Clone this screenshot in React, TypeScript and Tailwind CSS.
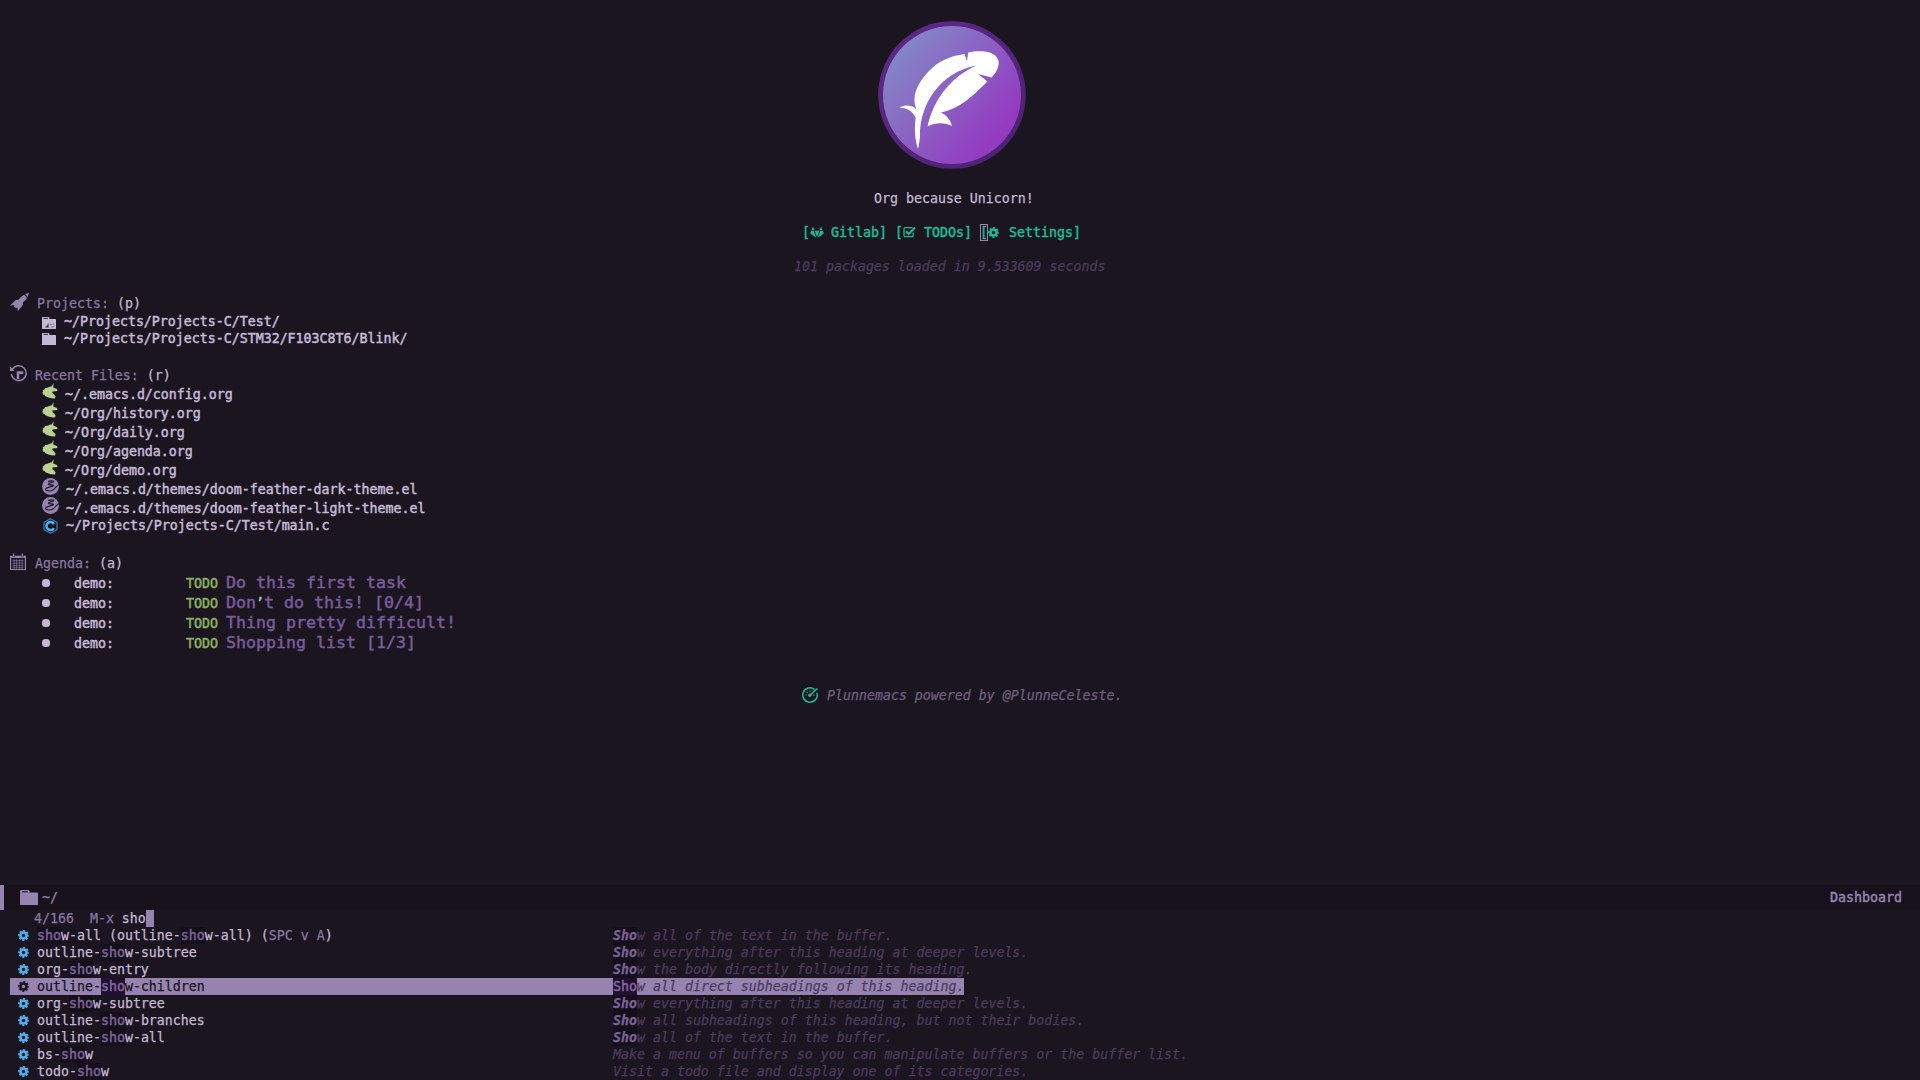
import React from "react";

const Gear = ({ className = "" }: { className?: string }) => (
  <svg viewBox="0 0 16 16" className={className} fill="none" stroke="currentColor">
    <circle cx="8" cy="8" r="4.4" strokeWidth="3.8" />
    <circle cx="8" cy="8" r="6.7" strokeWidth="2.6" strokeDasharray="3 2.262" strokeDashoffset="1.5" />
  </svg>
);

const Rocket = () => (
  <svg viewBox="0 0 19 19" className="h-[19px] w-[19px]" fill="currentColor">
    <path d="M19 0 15.2 1.1 17.7 4Z" />
    <path d="M14.2 1.8 17 4.9Q15.5 7.5 12.8 9.6L13 11.8 7.8 18.2 7.3 14.4 5.8 15.3 5 14.2 3.9 13.9 4.5 12.3 0 12.6 5.9 7 8.5 6.8Q11 3.5 14.2 1.8Z" />
  </svg>
);

const Gitlab = () => (
  <svg viewBox="0 0 14 12" className="h-3 w-[14px]" fill="currentColor">
    <path d="M3 .6 4.5 4.3H1.5ZM11 .6 12.5 4.3H9.5ZM4.7 4.8H9.3L7 11.3ZM1.1 5 .3 7Q.2 7.3 .6 7.7L6.3 11.7 3.7 5ZM12.9 5 13.7 7Q13.8 7.3 13.4 7.7L7.7 11.7 10.3 5Z" />
  </svg>
);

const Check = () => (
  <svg viewBox="0 0 13 12" className="h-3 w-[13px]" fill="none" stroke="currentColor">
    <path d="M10.2 6.6V9.4a1.2 1.2 0 0 1-1.2 1.2H2.2A1.2 1.2 0 0 1 1 9.4V2.8a1.2 1.2 0 0 1 1.2-1.2H9.4" strokeWidth="1.3" />
    <path d="M3 5.2 5.7 8 12 1.6" strokeWidth="2.1" />
  </svg>
);

const Folder = ({ className = "", repo = false }: { className?: string; repo?: boolean }) => (
  <svg viewBox="0 0 14 12" className={className} preserveAspectRatio="none">
    <path d="M0 .8Q0 0 .8 0H6.6Q7.4 0 7.4.8V2H13.4Q14 2 14 2.6V11.4Q14 12 13.4 12H.6Q0 12 0 11.4Z" fill="currentColor" />
    <path d="M1.6 1.4H6" stroke="#1b1520" strokeWidth=".9" />
    {repo && <path d="M3.3 10.4 6.6 6.6V10.4ZM8 7.4H10M9 9.8H12M10.6 7.2H12.4" stroke="#7d6f90" fill="#3b3147" strokeWidth=".9" />}
  </svg>
);

const History = () => (
  <svg viewBox="0 0 17 17" className="h-[17px] w-[17px]" fill="none" stroke="currentColor">
    <path d="M2.3 4.6A7.4 7.4 0 1 1 1.4 9" strokeWidth="1.5" />
    <path d="M0 1.4 4.6 5.9H0Z" fill="currentColor" stroke="none" />
    <path d="M8 14.2V7.6H13.3" strokeWidth="2.6" />
  </svg>
);

const Unicorn = () => (
  <svg viewBox="0 0 16 17" className="h-[17px] w-4">
    <path
      d="M11.7 0 11.2 4.5 14.8 5.9Q15.9 7 15.3 7.9L10.5 8.4Q9.6 9.7 11.8 11.3L13.6 13.6 13 15.6Q8.6 15.5 6.5 14.6L2.8 13 3 11.9 1 11.8 1.2 10.6 0 10.2 1.2 8.7.6 7.5 2.7 6.3 3.2 5 5.5 4.7 8.2 3.6 9.7 3.5Z"
      fill="#b9d191"
    />
  </svg>
);

const Emacs = () => (
  <svg viewBox="0 0 17 17" className="h-[17px] w-[17px]">
    <circle cx="8.5" cy="8.5" r="8.4" fill="currentColor" />
    <path
      d="M6.2 3.6Q8.5 2.4 11.8 3.4C12 4.8 6.4 4.6 6.4 6.3 6.6 7.3 11.4 6.2 11.6 7.4 11.4 8.9 3.6 8.8 3.5 11.3 3.7 13.3 9.5 13.8 11.7 11.4L16.5 6.6"
      fill="none"
      stroke="#1b1520"
      strokeWidth="1.2"
    />
  </svg>
);

const CFile = () => (
  <svg viewBox="0 0 15 16" className="h-4 w-[15px]" fill="none">
    <path d="M7.5.8 14 4.4V11.6L7.5 15.2 1 11.6V4.4Z" stroke="#3a76a5" strokeWidth="1.3" />
    <path d="M10.9 6A4 4 0 1 0 10.9 10" stroke="#51afef" strokeWidth="2.5" />
  </svg>
);

const Calendar = () => (
  <svg viewBox="0 0 16 18" className="h-[18px] w-4" fill="none" stroke="currentColor">
    <path d="M.6 4V16.5H15.4V4Z" strokeWidth="1.2" />
    <path d="M0 2.8H2.4V4.4H5V2.8H11V4.4H13.6V2.8H16V5H0Z" fill="currentColor" stroke="none" />
    <path d="M3.7.4V3.4M12.3.4V3.4" strokeWidth="1.3" />
    <path d="M2.5 7.6H13.5M2.5 10.1H13.5M2.5 12.6H13.5M2.5 14.8H13.5M4 6V15.5M6.7 6V15.5M9.4 6V15.5M12.1 6V15.5" strokeWidth=".8" opacity=".75" />
  </svg>
);

const Dashboard = () => (
  <svg viewBox="0 0 16 16" className="h-4 w-4" fill="none" stroke="currentColor">
    <path d="M12.6 2.5A7.2 7.2 0 1 0 14.9 6" strokeWidth="1.5" />
    <path d="M8 8 15.3 1.7" strokeWidth="1.6" />
    <circle cx="7.8" cy="8.2" r="1.7" fill="currentColor" stroke="none" />
    <path d="M3.7 8H4.9M5 4.9 5.8 5.6M8 3.5V4.7M11.3 8.2H12.5" strokeWidth="1.2" />
  </svg>
);

const Logo = () => (
  <svg viewBox="0 0 148 148" className="h-[148px] w-[148px]">
    <defs>
      <linearGradient id="disc" x1="0.12" y1="0.2" x2="0.82" y2="0.78">
        <stop offset="0" stopColor="#8484c6" />
        <stop offset="1" stopColor="#933cc0" />
      </linearGradient>
      <linearGradient id="rim" x1="0" y1="0" x2="1" y2="1">
        <stop offset="0" stopColor="#5f2888" />
        <stop offset="1" stopColor="#4a2270" />
      </linearGradient>
    </defs>
    <circle cx="74" cy="74" r="73.8" fill="url(#rim)" />
    <circle cx="74" cy="74" r="69" fill="url(#disc)" />
    <path
      fill="#fff"
      d="M86.5 33 89 40 90.2 31.5C98 30 108 29.5 114 32.5 124 37 122 48 113.5 56.5L100 53 109.5 60.5C95 75 81 88 63 91.5 68 94 73 99 73.8 105 66 101 58 101.5 49.5 105.5 55 80 72 56 98.5 44.5 62 51 41 84 42 116 40.5 128 40.2 127 40 128 37 119 36 108 37.7 97 35 90 28 86.5 21.5 86.5 28 83 35 84.5 38.5 88.5 33 76 39 63 50 51 60 40 72 35 86.5 33Z"
    />
  </svg>
);

type Item = { icon: React.ReactNode; text: string; w: string };

const files: Item[] = [
  ...["~/.emacs.d/config.org", "~/Org/history.org", "~/Org/daily.org", "~/Org/agenda.org", "~/Org/demo.org"].map((text) => ({
    icon: <Unicorn />,
    text,
    w: "w-[23px]",
  })),
  { icon: <Emacs />, text: "~/.emacs.d/themes/doom-feather-dark-theme.el", w: "w-6" },
  { icon: <Emacs />, text: "~/.emacs.d/themes/doom-feather-light-theme.el", w: "w-6" },
];

const tasks = [
  <>Do this first task</>,
  <>Don<span className="text-[13.288px] text-[#c5b8d6]">’</span>t do this! [0/4]</>,
  <>Thing pretty difficult!</>,
  <>Shopping list [1/3]</>,
];

const commands: { name: string; keys?: string; doc: string; selected?: boolean }[] = [
  { name: "show-all (outline-show-all)", keys: "SPC v A", doc: "Show all of the text in the buffer." },
  { name: "outline-show-subtree", doc: "Show everything after this heading at deeper levels." },
  { name: "org-show-entry", doc: "Show the body directly following its heading." },
  { name: "outline-show-children", doc: "Show all direct subheadings of this heading.", selected: true },
  { name: "org-show-subtree", doc: "Show everything after this heading at deeper levels." },
  { name: "outline-show-branches", doc: "Show all subheadings of this heading, but not their bodies." },
  { name: "outline-show-all", doc: "Show all of the text in the buffer." },
  { name: "bs-show", doc: "Make a menu of buffers so you can manipulate buffers or the buffer list." },
  { name: "todo-show", doc: "Visit a todo file and display one of its categories." },
];

const STRONG = "[-webkit-text-stroke:0.5px_currentColor]";

const matchStyle = (part: string, selected?: boolean) => {
  const colors = selected ? "bg-[#200f2e] text-[#8565a5]" : "bg-[#141019] text-[#7d6199]";
  if (part !== "Sho") return `${STRONG} ${colors}`;
  return selected ? `${STRONG} not-italic ${colors}` : `font-bold ${colors}`;
};

const Match = ({ text, selected }: { text: string; selected?: boolean }) => (
  <>
    {text.split(/(sho(?=w)|^Sho)/).map((part, i) =>
      part.toLowerCase() === "sho" ? (
        <span key={i} className={`inline-block h-[17px] w-6 ${matchStyle(part, selected)}`}>{part}</span>
      ) : (
        <span key={i}>{part}</span>
      ),
    )}
  </>
);

const Heading = ({ icon, label, hotkey, w }: { icon: React.ReactNode; label: string; hotkey: string; w: string }) => (
  <div className="flex h-[19px]">
    <span className={`${w} shrink-0 -mt-[2px] text-[#9683b0]`}>{icon}</span>
    <span className="text-[#8b77a5]">{label}&nbsp;</span>
    <span>({hotkey})</span>
  </div>
);

export default function App() {
  return (
    <div className="flex h-[1080px] w-[1920px] flex-col overflow-hidden whitespace-pre bg-[#1b1520] font-['DejaVu_Sans_Mono',monospace] text-[13.288px] leading-[17px] text-[#c5b8d6] [-webkit-text-stroke:0.25px_currentColor]">
      <main className="h-[885px] shrink-0">
        <div className="flex pl-[878px] pt-[21px]"><Logo /></div>
        <div className="mt-[21px] h-[17px] pl-[874px]">Org because Unicorn!</div>
        <div className={`mt-[17px] flex h-[17px] pl-[802px] text-[#1fb795] ${STRONG}`}>
          <span className="flex w-[93px]">[<span className="mt-[2px]"><Gitlab /></span><span className="ml-[7px]">Gitlab]</span></span>
          <span className="flex w-[85px]">[<span className="mt-[2px]"><Check /></span><span className="ml-2">TODOs]</span></span>
          <span className="flex">
            <span className="w-2 outline outline-1 -outline-offset-1 outline-[#9683b0]">[</span>
            <Gear className="mt-[3px] h-[11px] w-[11px]" />
            <span className="ml-[10px]">Settings]</span>
          </span>
        </div>
        <div className="mt-[17px] h-[17px] pl-[794px] italic text-[#4c3b5e]">101 packages loaded in 9.533609 seconds</div>

        <section className="mt-5 pl-[10px]">
          <Heading icon={<Rocket />} label="Projects:" hotkey="p" w="w-[27px]" />
          <div className="-mt-px pl-8">
            <div className="flex h-[17px]"><span className="w-[22px] pt-1"><Folder repo className="h-3 w-[14px]" /></span><span className={STRONG}>~/Projects/Projects-C/Test/</span></div>
            <div className="flex h-[17px]"><span className="w-[22px] pt-[3px]"><Folder className="h-3 w-[14px]" /></span><span className={STRONG}>~/Projects/Projects-C/STM32/F103C8T6/Blink/</span></div>
          </div>
        </section>

        <section className="mt-5 pl-[10px]">
          <Heading icon={<History />} label="Recent Files:" hotkey="r" w="w-[25px]" />
          <div className="pl-8">
            {files.map((f) => (
              <div key={f.text} className="flex h-[19px]">
                <span className={`${f.w} -mt-[3px] text-[#9683b0]`}>{f.icon}</span>
                <span className={STRONG}>{f.text}</span>
              </div>
            ))}
            <div className="-mt-[2px] flex h-[17px]">
              <span className="w-6 pl-px pt-[1px]"><CFile /></span>
              <span className={STRONG}>~/Projects/Projects-C/Test/main.c</span>
            </div>
          </div>
        </section>

        <section className="mt-[21px] pl-[10px]">
          <Heading icon={<Calendar />} label="Agenda:" hotkey="a" w="w-[25px]" />
          <div className="mt-px pl-8">
            {tasks.map((t, i) => (
              <div key={i} className={`flex h-5 ${STRONG}`}>
                <span className="mt-[4px] h-2 w-2 rounded-[3.5px] bg-[#c5b8d6]" />
                <span className="ml-[24px] w-[112px]">demo:</span>
                <span className="w-10 text-[#89b05d]">TODO</span>
                <span className="-mt-px text-[16.61px] text-[#785c9b]">{t}</span>
              </div>
            ))}
          </div>
        </section>

        <footer className="mt-[32px] flex h-[17px] pl-[802px] italic text-[#6f6080]">
          <span className="w-[25px] text-[#1fb795]"><Dashboard /></span>
          <span>Plunnemacs powered by @PlunneCeleste.</span>
        </footer>
      </main>

      <div className="flex h-[25px] shrink-0 items-center border-l-4 border-[#9683b0] bg-[#17111b] pl-4 pr-[18px] text-[#9683b0]">
        <Folder className="mb-px h-[15px] w-[18px]" />
        <span className="ml-1">~/</span>
        <span className={`ml-auto ${STRONG}`}>Dashboard</span>
      </div>

      <div className="flex h-[17px] shrink-0 pl-[34px]">
        <span className="text-[#8b77a5]">4/166  M-x </span>
        <span>sho</span>
        <span className="w-2 bg-[#9683b0]" />
      </div>

      <ul className="pl-[10px]">
        {commands.map((c) => (
          <li key={c.name} className={`flex h-[17px] w-max ${c.selected ? "bg-[#9683b0] text-[#1b1520]" : ""}`}>
            <span className={`w-[27px] pl-2 pt-[3px] ${c.selected ? "" : "text-[#51afef]"}`}><Gear className="h-[11px] w-[11px]" /></span>
            <span className="w-[576px]">
              <Match text={c.name} selected={c.selected} />
              {c.keys && <> (<span className="text-[#8b77a5]">{c.keys}</span>)</>}
            </span>
            <span className="italic text-[#4c3b5e]"><Match text={c.doc} selected={c.selected} /></span>
          </li>
        ))}
      </ul>
    </div>
  );
}
